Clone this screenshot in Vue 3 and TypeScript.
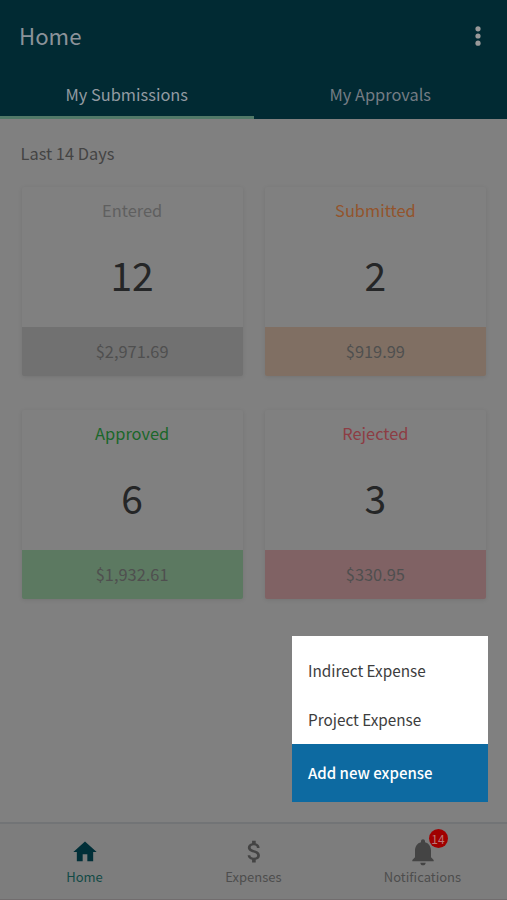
<script setup lang="ts">
interface Summary {
  label: string
  count: number
  amount: string
  tone: 'entered' | 'submitted' | 'approved' | 'rejected'
}

const summaries: Summary[] = [
  { label: 'Entered', count: 12, amount: '$2,971.69', tone: 'entered' },
  { label: 'Submitted', count: 2, amount: '$919.99', tone: 'submitted' },
  { label: 'Approved', count: 6, amount: '$1,932.61', tone: 'approved' },
  { label: 'Rejected', count: 3, amount: '$330.95', tone: 'rejected' },
]
</script>

<template>
  <div class="screen">
    <header class="header">
      <div class="title-bar">
        <h1 class="title">Home</h1>
        <svg class="more" viewBox="0 0 8 22" aria-hidden="true">
          <circle cx="4" cy="3.8" r="2.6" />
          <circle cx="4" cy="11" r="2.6" />
          <circle cx="4" cy="18.2" r="2.6" />
        </svg>
      </div>
      <nav class="tabs">
        <a class="tab active">My Submissions</a>
        <a class="tab">My Approvals</a>
      </nav>
    </header>

    <main class="content">
      <h2 class="period">Last 14 Days</h2>
      <div class="cards">
        <section v-for="s in summaries" :key="s.label" class="card" :class="s.tone">
          <h3 class="card-label">{{ s.label }}</h3>
          <p class="count">{{ s.count }}</p>
          <p class="amount">{{ s.amount }}</p>
        </section>
      </div>
    </main>

    <footer class="bottom-nav">
      <a class="nav-item current">
        <svg class="icon home" viewBox="0 0 24 24"><path d="M10 20v-6h4v6h5v-8h3L12 3 2 12h3v8z" /></svg>
        <span>Home</span>
      </a>
      <a class="nav-item">
        <svg class="icon money" viewBox="0 0 24 24"><path d="M11.8 10.9c-2.27-.59-3-1.2-3-2.15 0-1.09 1.01-1.85 2.7-1.85 1.78 0 2.44.85 2.5 2.1h2.21c-.07-1.72-1.12-3.3-3.21-3.81V3h-3v2.16c-1.94.42-3.5 1.68-3.5 3.61 0 2.31 1.91 3.46 4.7 4.13 2.5.6 3 1.48 3 2.41 0 .69-.49 1.79-2.7 1.79-2.06 0-2.87-.92-2.98-2.1h-2.2c.12 2.19 1.76 3.42 3.68 3.83V21h3v-2.15c1.95-.37 3.5-1.5 3.5-3.55 0-2.84-2.43-3.81-4.7-4.4z" /></svg>
        <span>Expenses</span>
      </a>
      <a class="nav-item">
        <svg class="icon bell" viewBox="0 0 24 24"><path d="M12 22c1.1 0 2-.9 2-2h-4c0 1.1.89 2 2 2zm6-6v-5c0-3.07-1.64-5.64-4.5-6.32V4c0-.83-.67-1.5-1.5-1.5s-1.5.67-1.5 1.5v.68C7.63 5.36 6 7.92 6 11v5l-2 2v1h16v-1l-2-2z" /></svg>
        <b class="badge">14</b>
        <span>Notifications</span>
      </a>
    </footer>

    <div class="menu">
      <div class="options">
        <a class="option">Indirect Expense</a>
        <a class="option">Project Expense</a>
      </div>
      <button class="add" type="button">Add new expense</button>
    </div>
  </div>
</template>

<style>
body {
  background: #808080;
}
</style>

<style scoped>
.screen {
  position: relative;
  display: flex;
  flex-direction: column;
  width: 507px;
  height: 900px;
  overflow: hidden;
  background: #808080;
  font-family: "Noto Sans CJK SC", "Noto Sans", sans-serif;
  font-size: 16.4px;
  color: #444;
}
h1, h2, h3, p {
  margin: 0;
  font-weight: 400;
}
.header {
  height: 119px;
  background: #012a33;
}
.title-bar {
  display: flex;
  justify-content: space-between;
  align-items: center;
  height: 72px;
  padding: 0 25.5px 0 19px;
}
.title {
  padding-bottom: 2px;
  font-size: 22.2px;
  line-height: 30px;
  color: #8b9299;
}
.more {
  width: 8px;
  height: 22px;
  fill: #999;
}
.tabs {
  display: flex;
  height: 47px;
}
.tab {
  box-sizing: border-box;
  flex: 1;
  height: 47px;
  border-bottom: 3px solid transparent;
  text-align: center;
  line-height: 44px;
  color: #747c84;
}
.tab.active {
  color: #929aa1;
  border-color: #517968;
}
.content {
  flex: 1;
  padding: 20px 21px 0 21.5px;
}
.period {
  margin-left: -1px;
  font-size: 16.4px;
  line-height: 28px;
  color: #444;
}
.cards {
  display: grid;
  grid-template-columns: 1fr 1fr;
  gap: 33.5px 22px;
  margin-top: 20px;
}
.card {
  display: flex;
  flex-direction: column;
  height: 189px;
  border-radius: 2px;
  overflow: hidden;
  box-shadow: 0 1px 4px rgba(0, 0, 0, 0.1);
  text-align: center;
}
.card-label {
  padding-top: 12px;
  font-size: 16.4px;
  line-height: 23px;
}
.count {
  flex: 1;
  font-size: 39px;
  line-height: 104px;
  color: #252627;
}
.amount {
  flex: none;
  height: 49px;
  line-height: 48px;
  color: #4f4f4f;
}
.entered .card-label { color: #5f5f5f; }
.entered .amount { background: #717171; }
.submitted .card-label { color: #93542c; }
.submitted .amount { background: #806f63; }
.approved .card-label { color: #1b672a; }
.approved .amount { background: #5c7961; }
.rejected .card-label { color: #8d3d44; }
.rejected .amount { background: #806264; }
.bottom-nav {
  box-sizing: border-box;
  display: flex;
  height: 78px;
  border-top: 2px solid #727476;
  border-bottom: 1px solid #716d6e;
  background: #7d7d7d;
}
.nav-item {
  position: relative;
  flex: 1;
  display: flex;
  flex-direction: column;
  align-items: center;
  padding-top: 12px;
  font-size: 13px;
  line-height: 18px;
  color: #4d4d4d;
}
.nav-item.current {
  color: #124a46;
}
.icon {
  width: 32px;
  height: 32px;
  flex: none;
  fill: #444;
}
.current .icon {
  fill: #012f38;
}
.icon.home {
  width: 28px;
  height: 28px;
  margin: 2px 0;
}
.icon.money {
  width: 29px;
  height: 29px;
  margin: 1px 0 2px 2px;
}
.badge {
  position: absolute;
  top: 4.5px;
  left: 90.5px;
  width: 19px;
  height: 19px;
  border-radius: 50%;
  background: #a00000;
  color: #b77;
  font-size: 12px;
  font-weight: 400;
  line-height: 19px;
  text-align: center;
}
.menu {
  position: absolute;
  left: 292px;
  top: 636px;
  width: 195.5px;
  height: 166px;
  background: #fff;
}
.options {
  box-sizing: border-box;
  display: flex;
  flex-direction: column;
  height: 108px;
  padding-top: 10px;
}
.option {
  height: 49px;
  padding-left: 16px;
  font-size: 15.3px;
  line-height: 48px;
  color: #3d3d3d;
}
.add {
  display: block;
  width: 100%;
  height: 58px;
  padding: 0 0 0 16px;
  border: 0;
  background: #0d6aa1;
  color: #fff;
  font: 500 15px/58px "Noto Sans CJK SC", "Noto Sans", sans-serif;
  text-align: left;
}
</style>
